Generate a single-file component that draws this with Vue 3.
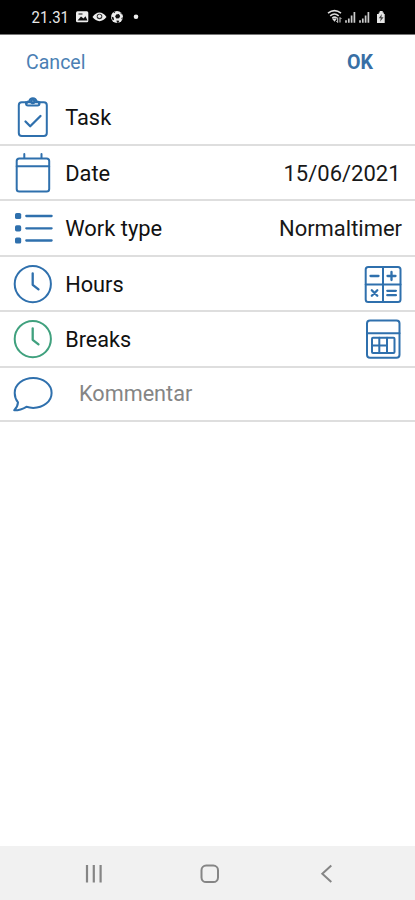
<script setup>
const rows = [
  { icon: 'task', label: 'Task', height: 56 },
  { icon: 'date', label: 'Date', value: '15/06/2021', width: 117, end: 128.5, height: 55 },
  { icon: 'list', label: 'Work type', value: 'Normaltimer', width: 123, end: 130, height: 56 },
  { icon: 'clock', label: 'Hours', action: 'calculator', height: 55 },
  { icon: 'clock', label: 'Breaks', action: 'table', green: true, height: 56 },
]
const labelWidths = { Task: 46, Date: 45, 'Work type': 97, Hours: 58.5, Breaks: 66 }
</script>

<template>
  <div class="screen">
    <header class="status">
      <svg class="status-left" width="120" height="34" viewBox="0 0 120 34">
        <text x="0.5" y="23" textLength="37.5" lengthAdjust="spacingAndGlyphs" class="time">21.31</text>
        <rect x="45" y="11.3" width="12.3" height="11" rx="1.5" fill="#eee" />
        <path d="M46.5 20.5l3.5-4 2.5 2 2-2.2 2 4.2z" fill="#111" />
        <path d="M47.5 14h4" stroke="#333" stroke-width="1.2" />
        <path d="M61.5 17c4-6 10-6 14 0-4 5.5-10 5.5-14 0z" fill="#eee" />
        <circle cx="68.5" cy="16.5" r="2.8" fill="#333" />
        <circle cx="68.5" cy="16.2" r="1.7" fill="#eee" />
        <circle cx="86" cy="17" r="6" fill="#eee" />
        <path d="M85.2 14.6l2.6-.6 1.4 1.9-1.1 2.4-2.7.2-1.3-1.9zM80.5 16.5l2.2 1 .3 2.8-1.6-.6zM85.5 20.6l2.8.2-.8 2h-1.6zM89.5 12.2l2 2.3-1.7-.4zM82.5 12.4l2-.8-1 1.7zM90.3 18l1.6-.7-.8 2.7z" fill="#111" />
        <circle cx="105" cy="16.8" r="2.3" fill="#eee" />
      </svg>
      <svg width="60" height="34" viewBox="0 0 60 34">
        <g fill="none" stroke="#ddd" stroke-width="1.6">
          <path d="M1 13.2c4-3.1 9-3.1 13 0M3.2 15.8c2.5-2.1 6-2.1 8.5 0" />
          <path d="M5.3 18c1.4-1.2 3-1.2 4.4 0" />
        </g>
        <path d="M4.8 18.6h5.2l-2.4 3.2z" fill="#ddd" />
        <path d="M10.7 17.5v5l-1.3-1.3M13 22.5v-5l1.4 1.4" fill="none" stroke="#ddd" />
        <g stroke="#ccc" stroke-width="1.7">
          <path d="M19 20.3v2.4M21.8 18.5v4.2M24.6 15.5v7.2M27.4 12v10.7M33 20.3v2.4M35.8 18.5v4.2M38.6 15.5v7.2M41.4 12v10.7" />
        </g>
        <path d="M50 14h1.7v-1.5h1V11h3v1.5h1.1V14h.9v9H50z" fill="#e5e5e5" />
        <path d="M54.8 14l-3 4.2h2l-.8 3.6 3.6-4.6h-2.2z" fill="#444" />
      </svg>
    </header>

    <nav class="toolbar">
      <svg width="62" height="30" viewBox="0 0 62 30">
        <text x="0" y="21" textLength="59.5" lengthAdjust="spacingAndGlyphs" class="cancel">Cancel</text>
      </svg>
      <svg width="28" height="30" viewBox="0 0 28 30">
        <text x="0" y="21" textLength="26" lengthAdjust="spacingAndGlyphs" class="ok">OK</text>
      </svg>
    </nav>

    <main>
      <section v-for="row in rows" :key="row.label" class="row" :style="{ height: row.height + 'px' }">
        <svg class="icon" :class="{ green: row.green }" width="40" height="40" viewBox="0 0 40 40">
          <g v-if="row.icon === 'task'">
            <rect x="5.8" y="5.3" width="28" height="33.7" rx="3" />
            <path d="M13 5.3v1q0 2.2 2 2.2h9.5q2 0 2-2.2v-1" />
            <path d="M13.8 6.3q0-1.8 2.6-2.1a3.5 3.5 0 0 1 6.9 0q2.6.3 2.6 2.1" />
            <circle cx="19.8" cy="4.5" r="1.7" />
            <path d="M12.5 24.5l4.7 4.7L27.5 19" class="heavy" />
          </g>
          <g v-else-if="row.icon === 'date'">
            <rect x="3.7" y="5.4" width="32.5" height="33.2" rx="2.6" />
            <path d="M3.7 13.3h32.5M11.3 1v4M28.5 1v4" />
          </g>
          <g v-else-if="row.icon === 'list'">
            <path d="M13.3 8h25.3M13.3 20.3h25.3M13.3 32.5h25.3" class="heavy" />
            <g class="dots">
              <rect x="2" y="4.9" width="6.2" height="6.2" rx="1.7" />
              <rect x="2" y="17.2" width="6.2" height="6.2" rx="1.7" />
              <rect x="2" y="29.4" width="6.2" height="6.2" rx="1.7" />
            </g>
          </g>
          <g v-else>
            <circle cx="19.8" cy="20.1" r="18.1" />
            <path d="M19.7 9.3v11.5l5.8 4.6" class="heavy" />
          </g>
        </svg>

        <svg class="label" width="110" height="40" viewBox="0 0 110 40">
          <text x="0.2" y="27.5" :textLength="labelWidths[row.label]" lengthAdjust="spacingAndGlyphs">{{ row.label }}</text>
        </svg>

        <svg v-if="row.value" class="value" width="130" height="40" viewBox="0 0 130 40">
          <text :x="row.end - row.width" y="27.5" :textLength="row.width" lengthAdjust="spacingAndGlyphs">{{ row.value }}</text>
        </svg>
        <svg v-if="row.action" class="icon action" width="40" height="40" viewBox="0 0 40 40">
          <g v-if="row.action === 'calculator'">
            <rect x="3.7" y="3" width="34.8" height="35" rx="2.5" />
            <path d="M21 3v35M3.7 20.5h34.8" />
            <path d="M8.5 12h8M25.5 12h8M29.5 8v8M9.8 26.2l5.5 5.5M15.3 26.2l-5.5 5.5M25.3 26.8h8.6M25.3 31.2h8.6" class="heavy" />
          </g>
          <g v-else>
            <rect x="5" y="1.5" width="32.5" height="37.3" rx="3" />
            <path d="M5 14.3h32.5" />
            <rect x="10" y="18.8" width="22.5" height="15.2" rx="1" />
            <path d="M17.3 18.8V34M25 18.8V34M10 26.4h15" />
          </g>
        </svg>
      </section>

      <section class="row comment">
        <svg class="icon" width="40" height="40" viewBox="0 0 40 40">
          <path d="M20.2 3.9c10.2 0 18.4 6.6 18.4 15s-8.2 15-18.4 15c-2.4 0-4.7-.4-6.8-1.1-3.5 2.2-7.9 3.5-12.2 3.5 2.4-2.3 3.6-5 3.8-7.9-2.1-2.7-3.3-5.9-3.3-9.5 0-8.4 8.3-15 18.5-15z" />
        </svg>
        <svg class="label" width="140" height="40" viewBox="0 0 140 40">
          <text x="14" y="27" textLength="113.3" lengthAdjust="spacingAndGlyphs" class="placeholder">Kommentar</text>
        </svg>
      </section>
    </main>

    <footer class="navigation">
      <svg width="20" height="22" viewBox="0 0 20 22">
        <path d="M3 2v17.5M9.8 2v17.5M16.6 2v17.5" stroke-width="2.2" />
      </svg>
      <svg class="home" width="20" height="22" viewBox="0 0 20 22">
        <rect x="1.5" y="2.6" width="16.5" height="16.5" rx="4.7" />
      </svg>
      <svg width="14" height="22" viewBox="0 0 14 22">
        <path d="M11.3 2.6L2.3 10.8l9 8.2" />
      </svg>
    </footer>
  </div>
</template>

<style scoped>
.screen {
  width: 415px;
  height: 900px;
  display: flex;
  flex-direction: column;
  background: #fff;
  font-family: Roboto, "Liberation Sans", sans-serif;
  overflow: hidden;
}
svg {
  display: block;
  flex: none;
  overflow: visible;
}
.status {
  height: 35px;
  box-sizing: border-box;
  display: flex;
  justify-content: space-between;
  padding: 0 28px 0 31px;
  background: #000;
  border-bottom: 1px solid #777;
}
.time {
  font-size: 16px;
  fill: #e8e8e8;
}
.toolbar {
  height: 55px;
  box-sizing: border-box;
  display: flex;
  align-items: flex-start;
  justify-content: space-between;
  padding: 13px 40px 0 26px;
}
.cancel {
  font-size: 20px;
  fill: #4b7fb4;
}
.ok {
  font-size: 20px;
  font-weight: 700;
  fill: #386fa5;
}
main {
  flex: 1;
}
.row {
  box-sizing: border-box;
  display: flex;
  align-items: center;
  padding: 0 13px;
  border-bottom: 2px solid #dedede;
}
.comment {
  height: 54px;
}
.icon {
  fill: none;
  stroke: #2f70ad;
  stroke-width: 2;
  stroke-linecap: round;
  stroke-linejoin: round;
}
.icon.green {
  stroke: #40a17e;
}
.heavy {
  stroke-width: 2.3;
}
.dots {
  fill: #2f70ad;
  stroke: none;
}
.label {
  margin-left: 12px;
  font-size: 22px;
  fill: #111;
}
.value,
.action {
  margin-left: auto;
}
.value {
  font-size: 22px;
  fill: #181818;
}
.placeholder {
  fill: #858585;
}
.navigation {
  height: 54px;
  box-sizing: border-box;
  display: flex;
  align-items: center;
  justify-content: space-between;
  padding: 2px 81px 0 84px;
  background: #f1f1f1;
}
.navigation svg {
  fill: none;
  stroke: #858585;
  stroke-width: 2;
}
.navigation .home {
  margin-right: 4px;
}
</style>

<style>
body {
  margin: 0;
  background: #fff;
}
</style>
